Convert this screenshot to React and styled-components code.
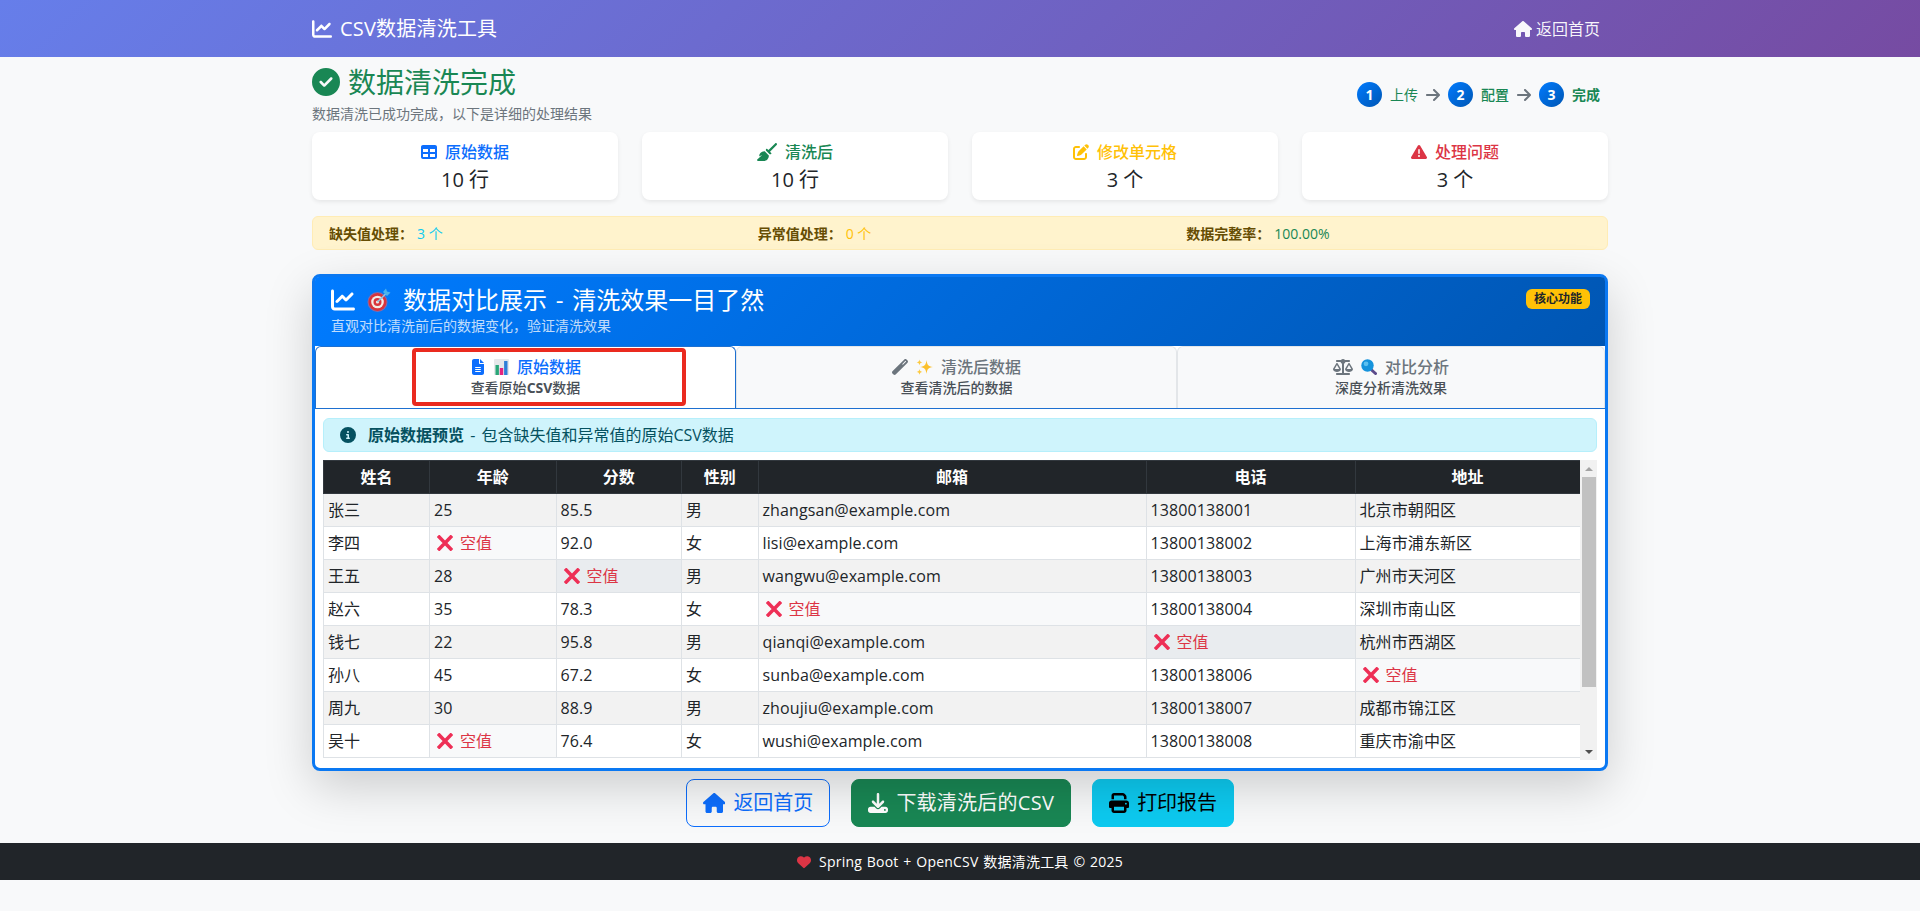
import React from "react";
import styled, { createGlobalStyle } from "styled-components";
import {
  FaChartLine, FaCircleCheck, FaHouse, FaTable, FaBroom, FaPenToSquare, FaTriangleExclamation,
  FaFileLines, FaWandMagic, FaScaleBalanced, FaCircleInfo, FaDownload, FaPrint, FaHeart, FaArrowRight,
} from "react-icons/fa6";

const Global = createGlobalStyle`
  * { box-sizing: border-box; }
  html, body { margin: 0; padding: 0; }
  body {
    background: #f8f9fa;
    color: #212529;
    font-family: "Open Sans", "Noto Sans CJK SC", sans-serif;
    font-size: 16px;
    line-height: 1.5;
    min-height: 911px;
  }
`;

const Nav = styled.nav`
  height: 57px;
  background: linear-gradient(135deg, #667eea 0%, #764ba2 100%);
  color: #fff;
`;
const NavInner = styled.div`
  width: 1296px;
  height: 100%;
  margin: 0 auto;
  padding-right: 8px;
  display: flex;
  align-items: center;
  justify-content: space-between;
`;
const Brand = styled.div`
  display: flex;
  align-items: center;
  gap: 8px;
  font-size: 20px;
  letter-spacing: 0.2px;
  svg { font-size: 20px; }
`;
const NavLink = styled.div`
  display: flex;
  align-items: center;
  gap: 4px;
  color: rgba(255, 255, 255, 0.95);
`;
const HomeIcon = styled(FaHouse)`
  width: 1.125em;
  height: 1em;
`;
const Main = styled.main`
  width: 1296px;
  margin: 0 auto;
`;
const Header = styled.header`
  display: flex;
  align-items: center;
  justify-content: space-between;
  padding: 8px 8px 8px 0;
`;
const Title = styled.h1`
  margin: 0 0 4px;
  display: flex;
  align-items: center;
  gap: 8px;
  font-size: 28px;
  line-height: 34px;
  font-weight: 400;
  color: #198754;
`;
const Lead = styled.p`
  margin: 0;
  font-size: 14px;
  line-height: 21px;
  color: #6c757d;
`;
const Steps = styled.div`
  display: flex;
  align-items: center;
  gap: 8px;
`;
const StepDot = styled.span`
  width: 25px;
  height: 25px;
  border-radius: 50%;
  background: linear-gradient(135deg, #007bff, #0056b3);
  color: #fff;
  font-size: 14px;
  font-weight: 700;
  display: flex;
  align-items: center;
  justify-content: center;
`;
const StepLabel = styled.span`
  font-size: 14px;
  line-height: 21px;
  color: #198754;
  font-weight: ${(p) => p.$weight};
`;
const StepArrow = styled(FaArrowRight)`
  width: 14px;
  height: 16px;
  color: #6c757d;
`;
const Stats = styled.section`
  display: grid;
  grid-template-columns: repeat(4, 1fr);
  gap: 24px;
`;
const Stat = styled.div`
  height: 68px;
  padding: 8px 8px 8px;
  background: #fff;
  border-radius: 8px;
  box-shadow: 0 2px 4px rgba(0, 0, 0, 0.075);
  text-align: center;
`;
const StatTitle = styled.div`
  height: 24px;
  margin-bottom: 4px;
  display: flex;
  align-items: center;
  justify-content: center;
  gap: 8px;
  font-weight: 500;
  color: ${(p) => p.$color};
`;
const BroomIcon = styled(FaBroom)`
  width: 20px;
  height: 18px;
`;
const StatValue = styled.div`
  font-size: 20px;
  line-height: 24px;
`;
const Notice = styled.section`
  margin-top: 16px;
  height: 34px;
  padding-left: 16px;
  background: #fff3cd;
  border: 1px solid #ffecb5;
  border-radius: 6px;
  display: grid;
  grid-template-columns: repeat(3, 428.67px);
  align-items: center;
  font-size: 14px;
  color: #664d03;
`;
const NoticeLabel = styled.strong`
  font-weight: 700;
  margin-right: 4px;
`;
const NoticeValue = styled.span`
  color: ${(p) => p.$color};
`;
const Compare = styled.section`
  position: relative;
  margin-top: 24px;
  border: 3px solid #0a78f2;
  border-radius: 8px;
  background: #fff;
  box-shadow: 0 16px 48px rgba(0, 0, 0, 0.175);
`;
const CompareHead = styled.div`
  position: relative;
  height: 69px;
  padding: 8px 16px;
  background: linear-gradient(135deg, #007bff 0%, #0056b3 100%);
  color: #fff;
  border-radius: 4px 4px 0 0;
`;
const CompareTitle = styled.h2`
  margin: 0 0 1px;
  display: flex;
  align-items: center;
  font-size: 24px;
  line-height: 29px;
  font-weight: 400;
  gap: 12px;
  word-spacing: 2.5px;
`;
const CompareSub = styled.div`
  font-size: 14px;
  line-height: 21px;
  opacity: 0.75;
`;
const Core = styled.span`
  position: absolute;
  top: 12px;
  right: 15px;
  height: 20px;
  width: 64px;
  background: #ffc107;
  color: #212529;
  border-radius: 6px;
  font-size: 12px;
  font-weight: 700;
  line-height: 20px;
  text-align: center;
`;
const Tabs = styled.div`
  position: relative;
  display: grid;
  grid-template-columns: 421px 441px 428px;
  border-bottom: 1px solid #1e70d0;
`;
const Tab = styled.div`
  height: 62px;
  padding: 8px 16px 0;
  text-align: center;
  background: ${(p) => (p.$active ? "#fff" : "#f8f9fa")};
  border: 1px solid ${(p) => (p.$active ? "#1e70d0" : "#e3e6e9")};
  border-bottom: 0;
  border-radius: 6px 6px 0 0;
  color: ${(p) => (p.$active ? "#0d6efd" : "#6c757d")};
`;
const TabTitle = styled.div`
  height: 24px;
  display: flex;
  align-items: center;
  justify-content: center;
  gap: 8px;
  font-weight: 500;
`;
const ScaleIcon = styled(FaScaleBalanced)`
  width: 20px;
  height: 16px;
`;
const TabSub = styled.div`
  font-size: 14px;
  line-height: 17px;
  font-weight: 500;
  color: #495057;
`;
const TabEm = styled.b`
  font-weight: 700;
`;
const Marker = styled.div`
  position: absolute;
  left: 97px;
  top: 2px;
  width: 274px;
  height: 58px;
  border: 4px solid #ea2a1f;
  border-radius: 4px;
  pointer-events: none;
`;
const Pane = styled.div`
  padding: 9px 8px 8px;
`;
const Info = styled.div`
  height: 34px;
  padding: 0 16px;
  margin-bottom: 8px;
  background: #cff4fc;
  border: 1px solid #b6effb;
  border-radius: 6px;
  color: #055160;
  display: flex;
  align-items: center;
  gap: 12px;
  word-spacing: 2px;
  strong { font-weight: 700; }
`;
const DataArea = styled.div`
  display: flex;
  height: 300px;
`;
const Scroller = styled.div`
  width: 1257px;
  height: 300px;
  overflow: hidden;
`;
const ScrollTrack = styled.div`
  width: 17px;
  display: flex;
  flex-direction: column;
  background: #f1f1f1;
`;
const ScrollBtn = styled.div`
  height: 17px;
  display: flex;
  align-items: center;
  justify-content: center;
  &::after {
    content: "";
    border-left: 4px solid transparent;
    border-right: 4px solid transparent;
    ${(p) => (p.$down ? "border-top: 4px solid #505050;" : "border-bottom: 4px solid #a3a3a3;")}
  }
`;
const ScrollThumb = styled.div`
  height: 210px;
  margin: 0 1px 0 2px;
  background: #c1c1c1;
`;
const ScrollGap = styled.div`
  flex: 1;
`;
const Table = styled.table`
  width: 1257px;
  table-layout: fixed;
  border-collapse: collapse;
`;
const Col = styled.col`
  width: ${(p) => p.$w}px;
`;
const Th = styled.th`
  height: 33px;
  padding: 0 4px;
  background: #212529;
  color: #fff;
  font-weight: 700;
  text-align: center;
  border: 1px solid #32383e;
`;
const Row = styled.tr`
  background: ${(p) => (p.$odd ? "#f2f2f2" : "#fff")};
`;
const Td = styled.td`
  height: 33px;
  padding: 4px;
  border: 1px solid #dee2e6;
  white-space: nowrap;
  background: ${(p) => (p.$empty ? (p.$odd ? "#e9ecef" : "#f8f9fa") : "transparent")};
`;
const Cell = styled.div`
  height: 24px;
  line-height: 24px;
  letter-spacing: 0.1px;
`;
const EmptyTag = styled.span`
  display: inline-flex;
  align-items: center;
  gap: 7px;
  height: 24px;
  padding-left: 3px;
  color: #dc3545;
`;
const Actions = styled.div`
  margin-top: 8px;
  display: flex;
  justify-content: center;
  gap: 21px;
`;
const Btn = styled.button`
  height: 48px;
  padding: 0 16px;
  display: inline-flex;
  align-items: center;
  gap: 8px;
  border-radius: 8px;
  border: 1px solid ${(p) => p.$border};
  background: ${(p) => p.$bg};
  color: ${(p) => p.$color};
  font: inherit;
  font-size: 20px;
  letter-spacing: ${(p) => p.$track || "0"};
`;
const Footer = styled.footer`
  margin-top: 16px;
  height: 37px;
  background: #212529;
  color: #fff;
  font-size: 14px;
  letter-spacing: 0.2px;
  word-spacing: 1px;
  display: flex;
  align-items: center;
  justify-content: center;
  gap: 8px;
`;
const HeartIcon = styled(FaHeart)`
  color: #dc3545;
`;

const Target = () => (
  <svg width="24" height="24" viewBox="0 0 24 24">
    <circle cx="10.5" cy="14" r="10" fill="#f0606a" opacity="0.55" />
    <circle cx="10.5" cy="14" r="9" fill="#d8343c" />
    <circle cx="10.5" cy="14" r="6.3" fill="#f3ebe6" />
    <circle cx="10.5" cy="14" r="4" fill="#d8343c" />
    <circle cx="10.5" cy="14" r="1.6" fill="#f3ebe6" />
    <path d="M10.5 14 20 4.5" stroke="#8fc4e4" strokeWidth="1.6" />
    <path d="M16 4 19 0.5 20 3.5 23.5 4.5 20 8z" fill="#4db4ea" />
  </svg>
);
const Bars = () => (
  <svg width="15" height="16" viewBox="0 0 15 16">
    <rect x="0" y="0" width="15" height="16" rx="1" fill="#e6e8ea" />
    <rect x="1.5" y="6" width="3.4" height="10" fill="#2aa778" />
    <rect x="5.8" y="9" width="3.4" height="7" fill="#e5247f" />
    <rect x="10.1" y="2" width="3.4" height="14" fill="#2f7fd8" />
  </svg>
);
const Sparkle = () => (
  <svg width="17" height="16" viewBox="0 0 17 16">
    <path d="M10.5 1 C11.2 6 12 7.2 17 8 C12 8.8 11.2 10 10.5 15 C9.8 10 9 8.8 4 8 C9 7.2 9.8 6 10.5 1z" fill="#fbc02d" />
    <path d="M3.5 0.5 C3.9 2.5 4.4 3 6.4 3.4 C4.4 3.8 3.9 4.3 3.5 6.3 C3.1 4.3 2.6 3.8 0.6 3.4 C2.6 3 3.1 2.5 3.5 0.5z" fill="#fcc93f" />
    <path d="M3.5 10 C3.9 12 4.4 12.5 6.4 12.9 C4.4 13.3 3.9 13.8 3.5 15.8 C3.1 13.8 2.6 13.3 0.6 12.9 C2.6 12.5 3.1 12 3.5 10z" fill="#fcc93f" />
  </svg>
);
const Lens = () => (
  <svg width="16" height="16" viewBox="0 0 16 16">
    <path d="M9.5 10 14.5 14.5" stroke="#5b4b8a" strokeWidth="3" strokeLinecap="round" />
    <circle cx="6.5" cy="6.5" r="6.2" fill="#1593dc" />
    <circle cx="5" cy="4.8" r="2.4" fill="#5cc0f0" />
  </svg>
);
const CrossMark = () => (
  <svg width="16" height="16" viewBox="0 0 16 16">
    <path d="M1 0.8 15 15.2M15 0.8 1 15.2" stroke="#ee2f56" strokeWidth="3.6" />
  </svg>
);

const Empty = () => (
  <EmptyTag>
    <CrossMark />
    空值
  </EmptyTag>
);

const columns = [
  ["姓名", 106], ["年龄", 126.5], ["分数", 125.5], ["性别", 76.5], ["邮箱", 388], ["电话", 209], ["地址", 225],
];
const rows = [
  ["张三", "25", "85.5", "男", "zhangsan@example.com", "13800138001", "北京市朝阳区"],
  ["李四", null, "92.0", "女", "lisi@example.com", "13800138002", "上海市浦东新区"],
  ["王五", "28", null, "男", "wangwu@example.com", "13800138003", "广州市天河区"],
  ["赵六", "35", "78.3", "女", null, "13800138004", "深圳市南山区"],
  ["钱七", "22", "95.8", "男", "qianqi@example.com", null, "杭州市西湖区"],
  ["孙八", "45", "67.2", "女", "sunba@example.com", "13800138006", null],
  ["周九", "30", "88.9", "男", "zhoujiu@example.com", "13800138007", "成都市锦江区"],
  ["吴十", null, "76.4", "女", "wushi@example.com", "13800138008", "重庆市渝中区"],
];

export default function App() {
  return (
    <>
      <Global />
      <Nav>
        <NavInner>
          <Brand><FaChartLine />CSV数据清洗工具</Brand>
          <NavLink><HomeIcon />返回首页</NavLink>
        </NavInner>
      </Nav>
      <Main>
        <Header>
          <div>
            <Title><FaCircleCheck />数据清洗完成</Title>
            <Lead>数据清洗已成功完成，以下是详细的处理结果</Lead>
          </div>
          <Steps>
            <StepDot>1</StepDot><StepLabel $weight={400}>上传</StepLabel><StepArrow />
            <StepDot>2</StepDot><StepLabel $weight={500}>配置</StepLabel><StepArrow />
            <StepDot>3</StepDot><StepLabel $weight={700}>完成</StepLabel>
          </Steps>
        </Header>
        <Stats>
          <Stat><StatTitle $color="#0d6efd"><FaTable />原始数据</StatTitle><StatValue>10 行</StatValue></Stat>
          <Stat><StatTitle $color="#198754"><BroomIcon />清洗后</StatTitle><StatValue>10 行</StatValue></Stat>
          <Stat><StatTitle $color="#ffc107"><FaPenToSquare />修改单元格</StatTitle><StatValue>3 个</StatValue></Stat>
          <Stat><StatTitle $color="#dc3545"><FaTriangleExclamation />处理问题</StatTitle><StatValue>3 个</StatValue></Stat>
        </Stats>
        <Notice>
          <div><NoticeLabel>缺失值处理：</NoticeLabel><NoticeValue $color="#0dcaf0">3 个</NoticeValue></div>
          <div><NoticeLabel>异常值处理：</NoticeLabel><NoticeValue $color="#ffc107">0 个</NoticeValue></div>
          <div><NoticeLabel>数据完整率：</NoticeLabel><NoticeValue $color="#198754">100.00%</NoticeValue></div>
        </Notice>
        <Compare>
          <CompareHead>
            <CompareTitle><FaChartLine /><Target />数据对比展示 - 清洗效果一目了然</CompareTitle>
            <CompareSub>直观对比清洗前后的数据变化，验证清洗效果</CompareSub>
            <Core>核心功能</Core>
          </CompareHead>
          <Tabs>
            <Tab $active>
              <TabTitle><FaFileLines /><Bars />原始数据</TabTitle>
              <TabSub>查看原始<TabEm>CSV</TabEm>数据</TabSub>
            </Tab>
            <Tab>
              <TabTitle><FaWandMagic /><Sparkle />清洗后数据</TabTitle>
              <TabSub>查看清洗后的数据</TabSub>
            </Tab>
            <Tab>
              <TabTitle><ScaleIcon /><Lens />对比分析</TabTitle>
              <TabSub>深度分析清洗效果</TabSub>
            </Tab>
            <Marker />
          </Tabs>
          <Pane>
            <Info>
              <FaCircleInfo />
              <span><strong>原始数据预览</strong> - 包含缺失值和异常值的原始CSV数据</span>
            </Info>
            <DataArea>
              <Scroller>
                <Table>
                  <colgroup>
                    {columns.map(([n, w]) => <Col key={n} $w={w} />)}
                  </colgroup>
                  <thead>
                    <tr>{columns.map(([n]) => <Th key={n}>{n}</Th>)}</tr>
                  </thead>
                  <tbody>
                    {rows.map((r, i) => (
                      <Row key={r[0]} $odd={i % 2 === 0}>
                        {r.map((c, j) => (
                          <Td key={j} $empty={c === null} $odd={i % 2 === 0}>
                            <Cell>{c === null ? <Empty /> : c}</Cell>
                          </Td>
                        ))}
                      </Row>
                    ))}
                  </tbody>
                </Table>
              </Scroller>
              <ScrollTrack>
                <ScrollBtn />
                <ScrollThumb />
                <ScrollGap />
                <ScrollBtn $down />
              </ScrollTrack>
            </DataArea>
          </Pane>
        </Compare>
        <Actions>
          <Btn $bg="transparent" $border="#0d6efd" $color="#0d6efd"><HomeIcon />返回首页</Btn>
          <Btn $bg="#198754" $border="#198754" $color="#fff" $track="0.25px"><FaDownload />下载清洗后的CSV</Btn>
          <Btn $bg="#0dcaf0" $border="#0dcaf0" $color="#000"><FaPrint />打印报告</Btn>
        </Actions>
      </Main>
      <Footer><HeartIcon />Spring Boot + OpenCSV 数据清洗工具 © 2025</Footer>
    </>
  );
}
